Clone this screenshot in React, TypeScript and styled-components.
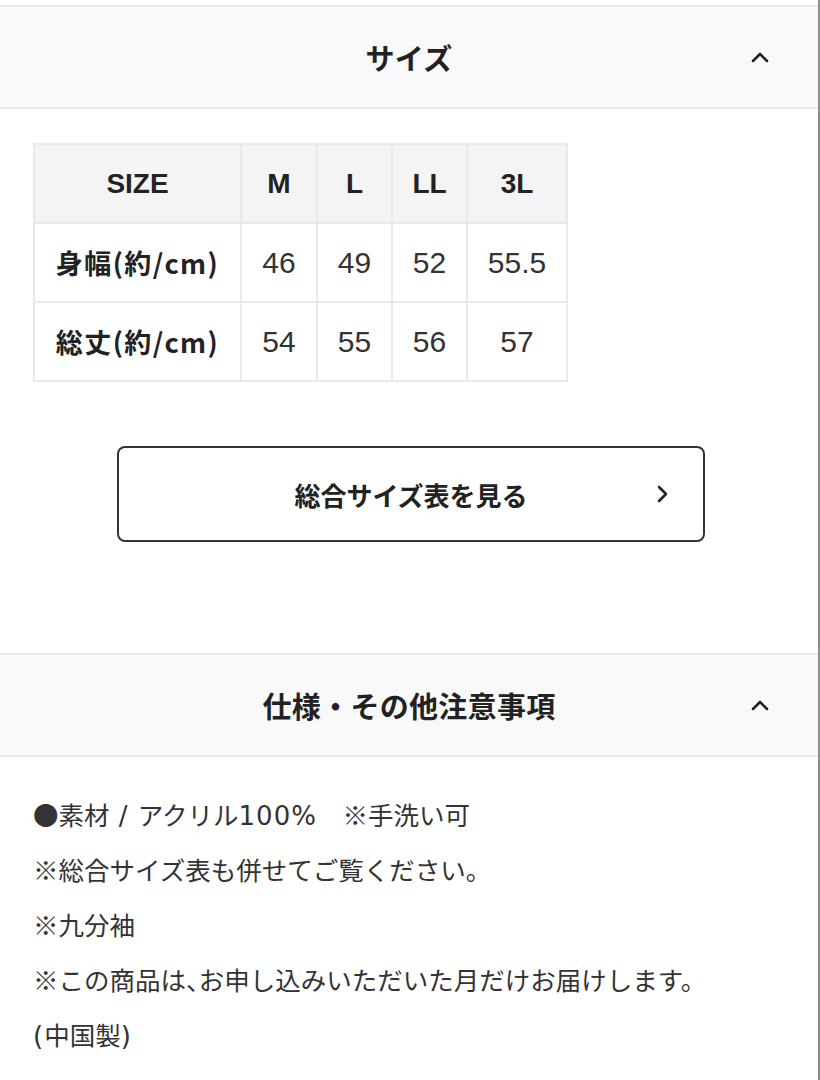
import React from 'react';
import styled, { createGlobalStyle } from 'styled-components';

const GlobalStyle = createGlobalStyle`
  html, body {
    margin: 0;
    padding: 0;
    background: #fff;
  }
  body {
    font-family: "Liberation Sans", "Noto Sans CJK JP", sans-serif;
    color: #333;
  }
`;

const sizes = ['M', 'L', 'LL', '3L'];
const rows = [
  { label: '身幅(約/cm)', values: ['46', '49', '52', '55.5'] },
  { label: '総丈(約/cm)', values: ['54', '55', '56', '57'] },
];
const colWidths = [207, 76, 75, 75, 100];

const ChevronUp = () => (
  <svg width="20" height="14" viewBox="0 0 20 14" fill="none">
    <polyline points="3,11 10,4 17,11" stroke="#222" strokeWidth="2.6" strokeLinecap="round" strokeLinejoin="round" />
  </svg>
);

const ChevronRight = () => (
  <svg width="14" height="20" viewBox="0 0 14 20" fill="none">
    <polyline points="4,3 11,10 4,17" stroke="#222" strokeWidth="2.6" strokeLinecap="round" strokeLinejoin="round" />
  </svg>
);

const App = () => {
  return (
    <>
      <GlobalStyle />
      <Page>
        <Section>
          <AccordionHeader>
            <Title>サイズ</Title>
            <Toggle>
              <ChevronUp />
            </Toggle>
          </AccordionHeader>
          <SizeBody>
            <SizeTable>
              <colgroup>
                {colWidths.map((w, i) => (
                  <col key={i} style={{ width: w }} />
                ))}
              </colgroup>
              <thead>
                <tr>
                  <HeadCell>SIZE</HeadCell>
                  {sizes.map((s) => (
                    <HeadCell key={s}>{s}</HeadCell>
                  ))}
                </tr>
              </thead>
              <tbody>
                {rows.map((row) => (
                  <tr key={row.label}>
                    <LabelCell>{row.label}</LabelCell>
                    {row.values.map((v, i) => (
                      <ValueCell key={i}>{v}</ValueCell>
                    ))}
                  </tr>
                ))}
              </tbody>
            </SizeTable>
            <ChartButton type="button">
              <span>総合サイズ表を見る</span>
              <ButtonArrow>
                <ChevronRight />
              </ButtonArrow>
            </ChartButton>
          </SizeBody>
        </Section>
        <Section>
          <AccordionHeader>
            <Title>仕様・その他注意事項</Title>
            <Toggle>
              <ChevronUp />
            </Toggle>
          </AccordionHeader>
          <NotesBody>
            <Note>
              ●素材<Latin> / </Latin>アクリル<Latin>100%</Latin>　※手洗い可
            </Note>
            <Note>※総合サイズ表も併せてご覧ください。</Note>
            <Note>※九分袖</Note>
            <Note>
              ※この商品は<Narrow>、</Narrow>お申し込みいただいた月だけお届けします。
            </Note>
            <Note>
              <Latin>(</Latin>中国製<Latin>)</Latin>
            </Note>
          </NotesBody>
        </Section>
      </Page>
    </>
  );
};

export default App;

const Page = styled.div`
  width: 820px;
  min-height: 1080px;
  padding-top: 5px;
  box-sizing: border-box;
  border-right: 2px solid #8c8c8c;
  background: #fff;
`;

const Section = styled.section`
  display: flex;
  flex-direction: column;
`;

const AccordionHeader = styled.div`
  position: relative;
  height: 100px;
  display: flex;
  align-items: center;
  justify-content: center;
  background: #f9f9f9;
  border-top: 2px solid #ebebeb;
  border-bottom: 2px solid #ebebeb;
`;

const Title = styled.h2`
  margin: 0;
  font-family: "Noto Sans CJK JP", sans-serif;
  font-size: 29px;
  font-weight: 700;
  color: #222;
  letter-spacing: 0.3px;
`;

const Toggle = styled.span`
  position: absolute;
  right: 48px;
  top: 50%;
  transform: translateY(-50%);
  display: flex;
`;

const SizeBody = styled.div`
  display: flex;
  flex-direction: column;
  padding: 34px 0 111px 33px;
`;

const SizeTable = styled.table`
  border-collapse: collapse;
  table-layout: fixed;
  width: 533px;
  border: 2px solid #e9e9e9;
`;

const Cell = styled.td`
  height: 77px;
  padding: 0;
  text-align: center;
  vertical-align: middle;
  border: 2px solid #e9e9e9;
  color: #222;
`;

const HeadCell = styled(Cell).attrs({ as: 'th' })`
  background: #f4f4f4;
  font-size: 28px;
  font-weight: 700;
  color: #222;
`;

const LabelCell = styled(Cell)`
  font-family: "Noto Sans CJK JP", sans-serif;
  font-size: 27px;
  font-weight: 700;
  letter-spacing: 1.4px;
`;

const ValueCell = styled(Cell)`
  font-size: 30px;
  font-weight: 400;
  color: #333;
`;

const ChartButton = styled.button`
  position: relative;
  align-self: flex-start;
  margin: 64px 0 0 84px;
  width: 588px;
  height: 96px;
  display: flex;
  align-items: center;
  justify-content: center;
  background: #fff;
  border: 2px solid #333;
  border-radius: 8px;
  font-family: "Noto Sans CJK JP", sans-serif;
  font-size: 26px;
  font-weight: 700;
  color: #222;
  cursor: pointer;
`;

const ButtonArrow = styled.span`
  position: absolute;
  right: 34px;
  top: 50%;
  transform: translateY(-50%);
  display: flex;
`;

const NotesBody = styled.div`
  padding: 29px 33px 0;
`;

const Note = styled.p`
  margin: 0;
  height: 55px;
  font-family: "Noto Sans CJK JP", sans-serif;
  font-size: 25.5px;
  line-height: 55px;
  color: #333;
  white-space: pre;
`;

const Latin = styled.span`
  font-family: "DejaVu Sans", sans-serif;
  font-size: 26px;
  line-height: 1;
  letter-spacing: 1px;
`;

const Narrow = styled.span`
  font-feature-settings: "halt";
`;
